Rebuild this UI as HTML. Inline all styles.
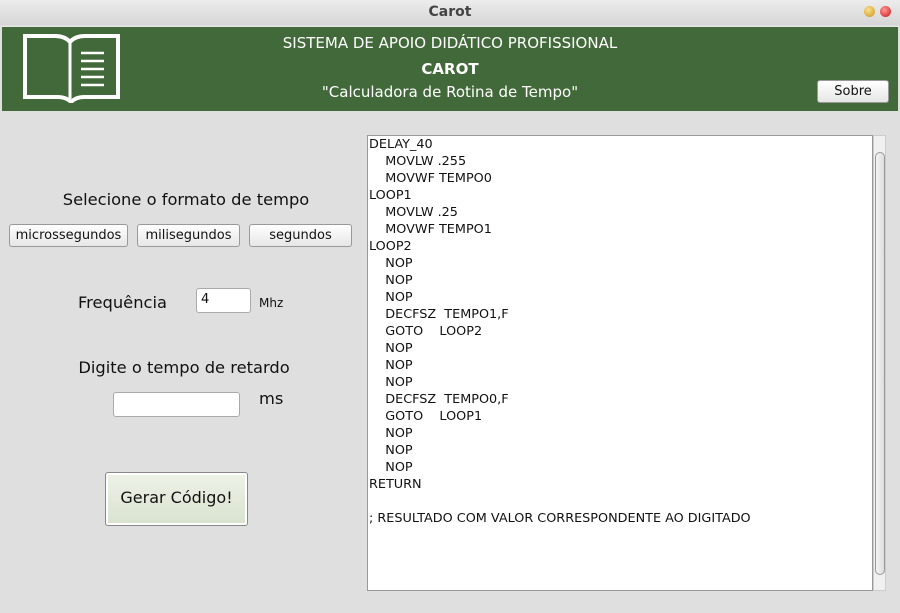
<!DOCTYPE html>
<html><head><style>
body{margin:0;width:900px;height:613px;background:#dfdfdf;font-family:"DejaVu Sans",sans-serif;position:relative;overflow:hidden;color:#111}
.a{position:absolute}
.tb{left:0;top:0;width:900px;height:25px;background:linear-gradient(#ececec,#d6d6d6);text-align:center;font:bold 14px "DejaVu Sans",sans-serif;line-height:24px;color:#444}
.hd{left:2px;top:26px;width:896px;height:84px;background:#426939;border-top:1px solid #e8e8e8}
.btn{background:linear-gradient(#fff,#e6e6e6);border:1px solid #999;border-radius:3px;font-size:13px;text-align:center;box-sizing:border-box}
.in{background:#fff;border:1px solid #aaa;border-radius:3px;box-sizing:border-box}
.ta{left:367px;top:135px;width:506px;height:456px;background:#fff;border:1px solid #999;box-sizing:border-box;font-size:12.8px;line-height:17px;padding:0 0 0 1px;white-space:pre;color:#111}
</style></head><body>
<div class="a tb">Carot</div>
<div class="a" style="left:864px;top:6px;width:11px;height:11px;border-radius:50%;background:radial-gradient(circle at 40% 35%,#fbe38a,#c9901a)"></div>
<div class="a" style="left:880px;top:6px;width:11px;height:11px;border-radius:50%;background:radial-gradient(circle at 40% 35%,#f99,#c11)"></div>
<div class="a hd"></div>
<svg class="a" style="left:22px;top:33px" width="100" height="70" viewBox="0 0 100 70">
<path d="M3 3 H33 Q43 3 48 9 Q53 3 63 3 H96 V64 H62 Q54 64 49 69 Q44 64 36 64 H3 Z" fill="none" stroke="#fff" stroke-width="4"/>
<path d="M48 10 V66" stroke="#fff" stroke-width="3"/>
<path d="M59 20H82M59 28H82M59 36H82M59 44H82M59 52H82" stroke="#fff" stroke-width="2.5"/>
</svg>
<div class="a" style="left:250px;width:400px;top:34px;text-align:center;color:#fff;font-size:15px">SISTEMA DE APOIO DIDÁTICO PROFISSIONAL</div>
<div class="a" style="left:250px;width:400px;top:60px;text-align:center;color:#fff;font-size:15px;font-weight:bold">CAROT</div>
<div class="a" style="left:250px;width:400px;top:83px;text-align:center;color:#fff;font-size:15px">"Calculadora de Rotina de Tempo"</div>
<div class="a btn" style="left:817px;top:80px;width:72px;height:23px;line-height:21px">Sobre</div>
<div class="a" style="left:0;width:372px;top:190px;text-align:center;font-size:16.3px">Selecione o formato de tempo</div>
<div class="a btn" style="left:9px;top:224px;width:119px;height:23px;line-height:21px">microssegundos</div>
<div class="a btn" style="left:137px;top:224px;width:103px;height:23px;line-height:21px">milisegundos</div>
<div class="a btn" style="left:249px;top:224px;width:103px;height:23px;line-height:21px">segundos</div>
<div class="a" style="left:78px;top:293px;font-size:16.3px">Frequência</div>
<div class="a in" style="left:196px;top:288px;width:55px;height:25px;font-size:13px;padding:3px 0 0 4px">4</div>
<div class="a" style="left:259px;top:296px;font-size:12px">Mhz</div>
<div class="a" style="left:0;width:368px;top:358px;text-align:center;font-size:16.3px">Digite o tempo de retardo</div>
<div class="a in" style="left:113px;top:392px;width:127px;height:25px"></div>
<div class="a" style="left:259px;top:389px;font-size:16.3px">ms</div>
<div class="a btn" style="left:105px;top:472px;width:143px;height:54px;line-height:50px;font-size:16px;background:linear-gradient(#eef2e8,#d9e2cf);border:1px solid #888;box-shadow:inset 0 0 0 2px #fff">Gerar Código!</div>
<div class="a ta">DELAY_40
    MOVLW .255
    MOVWF TEMPO0
LOOP1
    MOVLW .25
    MOVWF TEMPO1
LOOP2
    NOP
    NOP
    NOP
    DECFSZ  TEMPO1,F
    GOTO    LOOP2
    NOP
    NOP
    NOP
    DECFSZ  TEMPO0,F
    GOTO    LOOP1
    NOP
    NOP
    NOP
RETURN

; RESULTADO COM VALOR CORRESPONDENTE AO DIGITADO</div>
<div class="a" style="left:873px;top:135px;width:13px;height:456px;background:#f0f0f0;border:1px solid #ccc;box-sizing:border-box"></div>
<div class="a" style="left:875px;top:152px;width:10px;height:423px;border:1px solid #999;border-radius:5px;background:linear-gradient(90deg,#f4f4f4,#ddd);box-sizing:border-box"></div>
</body></html>
